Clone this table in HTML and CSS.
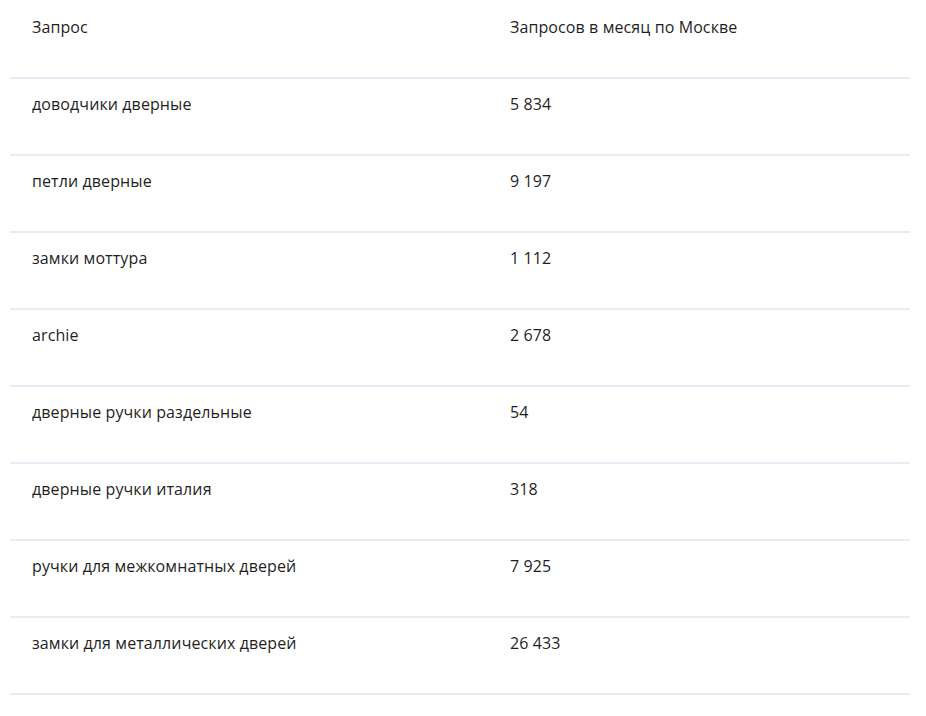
FILE: index.html
```html
<!DOCTYPE html>
<html lang="ru">
<head>
<meta charset="utf-8">
<link rel="stylesheet" href="styles.css">
</head>
<body>
<div class="table">
  <div class="row head"><div class="cell">Запрос</div><div class="cell">Запросов в месяц по Москве</div></div>
  <div class="row"><div class="cell">доводчики дверные</div><div class="cell">5 834</div></div>
  <div class="row"><div class="cell">петли дверные</div><div class="cell">9 197</div></div>
  <div class="row"><div class="cell">замки моттура</div><div class="cell">1 112</div></div>
  <div class="row"><div class="cell">archie</div><div class="cell">2 678</div></div>
  <div class="row"><div class="cell">дверные ручки раздельные</div><div class="cell">54</div></div>
  <div class="row"><div class="cell">дверные ручки италия</div><div class="cell">318</div></div>
  <div class="row"><div class="cell">ручки для межкомнатных дверей</div><div class="cell">7 925</div></div>
  <div class="row"><div class="cell">замки для металлических дверей</div><div class="cell">26 433</div></div>
</div>
</body>
</html>
```
FILE: styles.css
```css
html, body {
  margin: 0;
  padding: 0;
  background: #fff;
}
body {
  padding: 2px 16px 0 10px;
  font-family: "Open Sans", "DejaVu Sans", sans-serif;
  font-size: 16px;
  line-height: 22px;
  letter-spacing: 0.1px;
  color: #1f1f1f;
}
.table {
  width: 900px;
}
.row {
  display: grid;
  grid-template-columns: 478px 1fr;
  height: 75px;
  border-bottom: 2px solid #e9ecf6;
}
.cell {
  padding: 14px 22px 0 22px;
}
```
